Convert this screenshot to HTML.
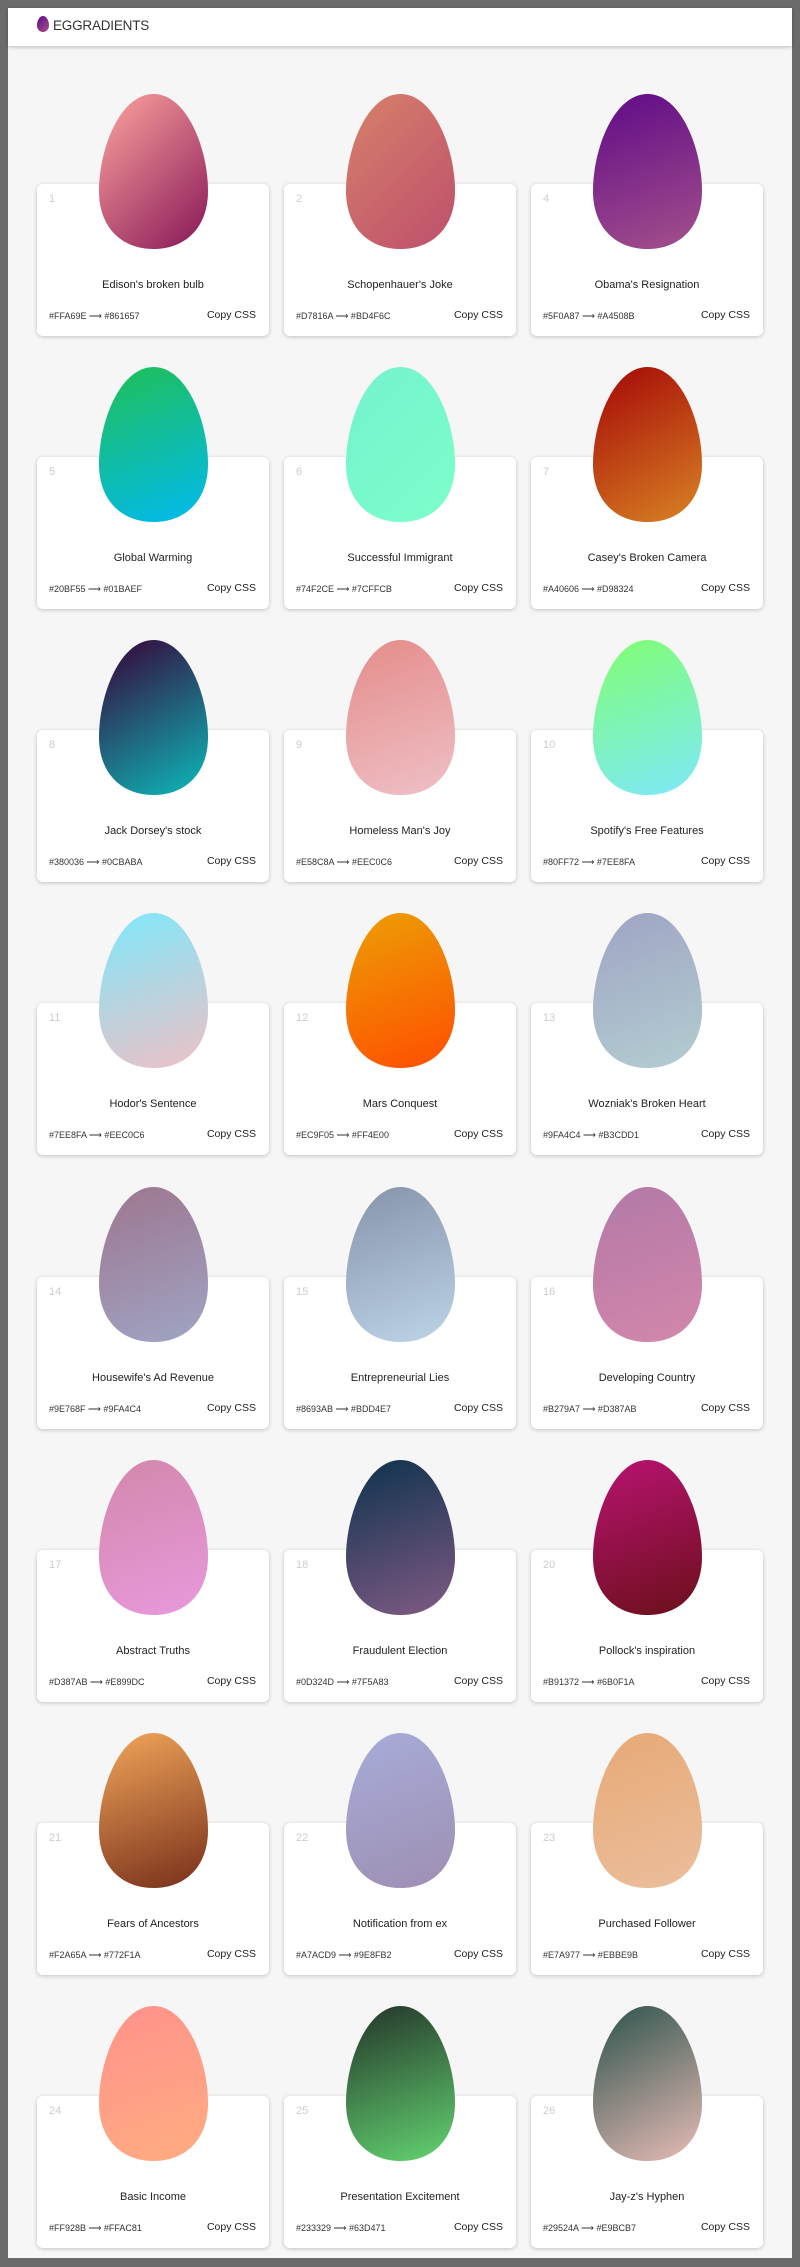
<!DOCTYPE html>
<html><head><meta charset="utf-8"><style>
*{margin:0;padding:0;box-sizing:border-box}
html,body{width:800px;height:2267px;background:#6b6b6b;font-family:"Liberation Sans",sans-serif;overflow:hidden}
#page{position:absolute;left:8px;top:8px;width:784px;height:2250px;background:#f6f6f6}
#hdr{position:absolute;left:0;top:0;width:784px;height:38px;background:#fff;box-shadow:0 1px 4px rgba(0,0,0,.25)}
#hdr .logo{position:absolute;left:29px;top:8px;width:12px;height:16px;border-radius:50% 50% 50% 50%/60% 60% 40% 40%;background:linear-gradient(135deg,#5F0A87,#A4508B)}
#hdr .t{position:absolute;left:45px;top:10px;font-size:13.5px;color:#333;letter-spacing:-.2px}
.card{position:absolute;width:232px;height:152px;background:#fff;border-radius:6px;box-shadow:0 1px 4px rgba(0,0,0,.22)}
.n{position:absolute;left:12px;top:9px;font-size:11px;color:#ccc}
.egg{position:absolute;left:62px;top:-90px;width:109px;height:155px;clip-path:path("M54.5 0 C88 0 109 55 109 97 C109 134 86 155 54.5 155 C23 155 0 134 0 97 C0 55 21 0 54.5 0 Z")}
.ti{position:absolute;left:0;width:100%;top:95px;text-align:center;font-size:11px;color:#222}
.hx{position:absolute;left:12px;top:127px;font-size:9px;color:#333}
.cp{position:absolute;right:13px;top:125px;font-size:10.5px;color:#222}
</style></head><body><div id="page">
<div id="hdr"><div class="logo"></div><div class="t">EGGRADIENTS</div></div>

<div class="card" style="left:29px;top:176px"><div class="n">1</div><div class="egg" style="background:linear-gradient(135deg,#FFA69E,#861657)"></div><div class="ti">Edison's broken bulb</div><div class="hx">#FFA69E ⟶ #861657</div><div class="cp">Copy CSS</div></div>
<div class="card" style="left:276px;top:176px"><div class="n">2</div><div class="egg" style="background:linear-gradient(135deg,#D7816A,#BD4F6C)"></div><div class="ti">Schopenhauer's Joke</div><div class="hx">#D7816A ⟶ #BD4F6C</div><div class="cp">Copy CSS</div></div>
<div class="card" style="left:523px;top:176px"><div class="n">4</div><div class="egg" style="background:linear-gradient(160deg,#5F0A87,#A4508B)"></div><div class="ti">Obama's Resignation</div><div class="hx">#5F0A87 ⟶ #A4508B</div><div class="cp">Copy CSS</div></div>

<div class="card" style="left:29px;top:449px"><div class="n">5</div><div class="egg" style="background:linear-gradient(160deg,#20BF55,#01BAEF)"></div><div class="ti">Global Warming</div><div class="hx">#20BF55 ⟶ #01BAEF</div><div class="cp">Copy CSS</div></div>
<div class="card" style="left:276px;top:449px"><div class="n">6</div><div class="egg" style="background:linear-gradient(135deg,#74F2CE,#7CFFCB)"></div><div class="ti">Successful Immigrant</div><div class="hx">#74F2CE ⟶ #7CFFCB</div><div class="cp">Copy CSS</div></div>
<div class="card" style="left:523px;top:449px"><div class="n">7</div><div class="egg" style="background:linear-gradient(150deg,#A40606,#D98324)"></div><div class="ti">Casey's Broken Camera</div><div class="hx">#A40606 ⟶ #D98324</div><div class="cp">Copy CSS</div></div>

<div class="card" style="left:29px;top:722px"><div class="n">8</div><div class="egg" style="background:linear-gradient(150deg,#380036,#0CBABA)"></div><div class="ti">Jack Dorsey's stock</div><div class="hx">#380036 ⟶ #0CBABA</div><div class="cp">Copy CSS</div></div>
<div class="card" style="left:276px;top:722px"><div class="n">9</div><div class="egg" style="background:linear-gradient(160deg,#E58C8A,#EEC0C6)"></div><div class="ti">Homeless Man's Joy</div><div class="hx">#E58C8A ⟶ #EEC0C6</div><div class="cp">Copy CSS</div></div>
<div class="card" style="left:523px;top:722px"><div class="n">10</div><div class="egg" style="background:linear-gradient(160deg,#80FF72,#7EE8FA)"></div><div class="ti">Spotify's Free Features</div><div class="hx">#80FF72 ⟶ #7EE8FA</div><div class="cp">Copy CSS</div></div>

<div class="card" style="left:29px;top:995px"><div class="n">11</div><div class="egg" style="background:linear-gradient(160deg,#7EE8FA,#EEC0C6)"></div><div class="ti">Hodor's Sentence</div><div class="hx">#7EE8FA ⟶ #EEC0C6</div><div class="cp">Copy CSS</div></div>
<div class="card" style="left:276px;top:995px"><div class="n">12</div><div class="egg" style="background:linear-gradient(160deg,#EC9F05,#FF4E00)"></div><div class="ti">Mars Conquest</div><div class="hx">#EC9F05 ⟶ #FF4E00</div><div class="cp">Copy CSS</div></div>
<div class="card" style="left:523px;top:995px"><div class="n">13</div><div class="egg" style="background:linear-gradient(160deg,#9FA4C4,#B3CDD1)"></div><div class="ti">Wozniak's Broken Heart</div><div class="hx">#9FA4C4 ⟶ #B3CDD1</div><div class="cp">Copy CSS</div></div>

<div class="card" style="left:29px;top:1269px"><div class="n">14</div><div class="egg" style="background:linear-gradient(160deg,#9E768F,#9FA4C4)"></div><div class="ti">Housewife's Ad Revenue</div><div class="hx">#9E768F ⟶ #9FA4C4</div><div class="cp">Copy CSS</div></div>
<div class="card" style="left:276px;top:1269px"><div class="n">15</div><div class="egg" style="background:linear-gradient(160deg,#8693AB,#BDD4E7)"></div><div class="ti">Entrepreneurial Lies</div><div class="hx">#8693AB ⟶ #BDD4E7</div><div class="cp">Copy CSS</div></div>
<div class="card" style="left:523px;top:1269px"><div class="n">16</div><div class="egg" style="background:linear-gradient(160deg,#B279A7,#D387AB)"></div><div class="ti">Developing Country</div><div class="hx">#B279A7 ⟶ #D387AB</div><div class="cp">Copy CSS</div></div>

<div class="card" style="left:29px;top:1542px"><div class="n">17</div><div class="egg" style="background:linear-gradient(160deg,#D387AB,#E899DC)"></div><div class="ti">Abstract Truths</div><div class="hx">#D387AB ⟶ #E899DC</div><div class="cp">Copy CSS</div></div>
<div class="card" style="left:276px;top:1542px"><div class="n">18</div><div class="egg" style="background:linear-gradient(160deg,#0D324D,#7F5A83)"></div><div class="ti">Fraudulent Election</div><div class="hx">#0D324D ⟶ #7F5A83</div><div class="cp">Copy CSS</div></div>
<div class="card" style="left:523px;top:1542px"><div class="n">20</div><div class="egg" style="background:linear-gradient(160deg,#B91372,#6B0F1A)"></div><div class="ti">Pollock's inspiration</div><div class="hx">#B91372 ⟶ #6B0F1A</div><div class="cp">Copy CSS</div></div>

<div class="card" style="left:29px;top:1815px"><div class="n">21</div><div class="egg" style="background:linear-gradient(160deg,#F2A65A,#772F1A)"></div><div class="ti">Fears of Ancestors</div><div class="hx">#F2A65A ⟶ #772F1A</div><div class="cp">Copy CSS</div></div>
<div class="card" style="left:276px;top:1815px"><div class="n">22</div><div class="egg" style="background:linear-gradient(160deg,#A7ACD9,#9E8FB2)"></div><div class="ti">Notification from ex</div><div class="hx">#A7ACD9 ⟶ #9E8FB2</div><div class="cp">Copy CSS</div></div>
<div class="card" style="left:523px;top:1815px"><div class="n">23</div><div class="egg" style="background:linear-gradient(160deg,#E7A977,#EBBE9B)"></div><div class="ti">Purchased Follower</div><div class="hx">#E7A977 ⟶ #EBBE9B</div><div class="cp">Copy CSS</div></div>

<div class="card" style="left:29px;top:2088px"><div class="n">24</div><div class="egg" style="background:linear-gradient(160deg,#FF928B,#FFAC81)"></div><div class="ti">Basic Income</div><div class="hx">#FF928B ⟶ #FFAC81</div><div class="cp">Copy CSS</div></div>
<div class="card" style="left:276px;top:2088px"><div class="n">25</div><div class="egg" style="background:linear-gradient(160deg,#233329,#63D471)"></div><div class="ti">Presentation Excitement</div><div class="hx">#233329 ⟶ #63D471</div><div class="cp">Copy CSS</div></div>
<div class="card" style="left:523px;top:2088px"><div class="n">26</div><div class="egg" style="background:linear-gradient(150deg,#29524A,#E9BCB7)"></div><div class="ti">Jay-z's Hyphen</div><div class="hx">#29524A ⟶ #E9BCB7</div><div class="cp">Copy CSS</div></div>
</div></body></html>
